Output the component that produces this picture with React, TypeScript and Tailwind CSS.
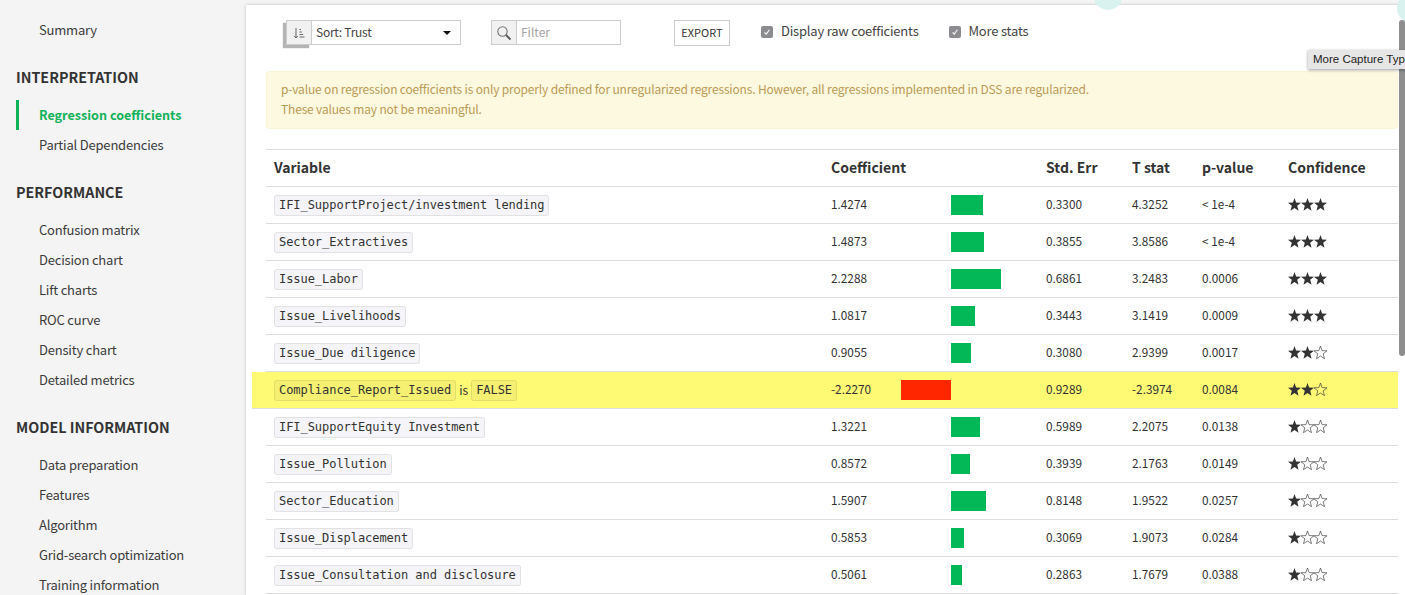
import React from "react";

const sans = "font-['Noto_Sans_CJK_SC','Source_Sans_Pro',sans-serif]";

const rows = [
  { name: "IFI_SupportProject/investment lending", coef: "1.4274", bar: 32, err: "0.3300", t: "4.3252", p: "< 1e-4", stars: 3 },
  { name: "Sector_Extractives", coef: "1.4873", bar: 33, err: "0.3855", t: "3.8586", p: "< 1e-4", stars: 3 },
  { name: "Issue_Labor", coef: "2.2288", bar: 50, err: "0.6861", t: "3.2483", p: "0.0006", stars: 3 },
  { name: "Issue_Livelihoods", coef: "1.0817", bar: 24, err: "0.3443", t: "3.1419", p: "0.0009", stars: 3 },
  { name: "Issue_Due diligence", coef: "0.9055", bar: 20, err: "0.3080", t: "2.9399", p: "0.0017", stars: 2 },
  { name: "Compliance_Report_Issued", value: "FALSE", coef: "-2.2270", bar: -50, err: "0.9289", t: "-2.3974", p: "0.0084", stars: 2 },
  { name: "IFI_SupportEquity Investment", coef: "1.3221", bar: 29, err: "0.5989", t: "2.2075", p: "0.0138", stars: 1 },
  { name: "Issue_Pollution", coef: "0.8572", bar: 19, err: "0.3939", t: "2.1763", p: "0.0149", stars: 1 },
  { name: "Sector_Education", coef: "1.5907", bar: 35, err: "0.8148", t: "1.9522", p: "0.0257", stars: 1 },
  { name: "Issue_Displacement", coef: "0.5853", bar: 13, err: "0.3069", t: "1.9073", p: "0.0284", stars: 1 },
  { name: "Issue_Consultation and disclosure", coef: "0.5061", bar: 11, err: "0.2863", t: "1.7679", p: "0.0388", stars: 1 },
];

const groups = [
  { title: "INTERPRETATION", items: ["Regression coefficients", "Partial Dependencies"] },
  { title: "PERFORMANCE", items: ["Confusion matrix", "Decision chart", "Lift charts", "ROC curve", "Density chart", "Detailed metrics"] },
  { title: "MODEL INFORMATION", items: ["Data preparation", "Features", "Algorithm", "Grid-search optimization", "Training information"] },
];

function NavItem({ label }: { label: string }) {
  const active = label === "Regression coefficients";
  return (
    <div
      className={
        active
          ? "h-[30px] ml-[16px] pl-[20px] border-l-[3px] border-[#0fb257] flex items-center text-[12.6px] font-semibold text-[#12b259]"
          : "h-[30px] ml-[39px] flex items-center text-[13px] tracking-[-0.2px] text-[#3c3c3c]"
      }
    >
      <span className="-translate-y-[0.5px]">{label}</span>
    </div>
  );
}

function Sidebar() {
  return (
    <aside className="w-[246px] shrink-0 pt-[15px]">
      <NavItem label="Summary" />
      {groups.map((g) => (
        <div key={g.title} className="mt-[21px]">
          <div className="h-[22px] mb-[12px] pl-[16px] flex items-center text-[14.3px] font-bold text-[#333333]">
            {g.title}
          </div>
          {g.items.map((i) => (
            <NavItem key={i} label={i} />
          ))}
        </div>
      ))}
    </aside>
  );
}

function Chip({ children }: { children: React.ReactNode }) {
  return (
    <code className="inline-block h-[21px] leading-[19px] px-[4px] rounded-[3px] border border-[#00000014] bg-[#0000660a] font-['DejaVu_Sans_Mono',monospace] text-[12px] tracking-[-0.05px] text-[#333333]">
      {children}
    </code>
  );
}

function Check() {
  return (
    <span className="w-[12px] h-[12px] rounded-[2px] bg-[#8c8c90] flex items-center justify-center">
      <svg width="8" height="8" viewBox="0 0 8 8" fill="none">
        <path d="M1.6 4.4 L3.2 6.2 L6.4 1.8" stroke="#ffffff" strokeWidth="1.1" />
      </svg>
    </span>
  );
}

const STAR = "M6.5 0 L8.1 4.6 L13 4.8 L9.2 7.8 L10.5 12.7 L6.5 10 L2.5 12.7 L3.8 7.8 L0 4.8 L4.9 4.6 Z";

function Stars({ n }: { n: number }) {
  return (
    <span className="flex pb-[2px]">
      {[0, 1, 2].map((i) => (
        <svg key={i} width="13" height="13" viewBox="0 0 13 13">
          <path
            d={STAR}
            fill={i < n ? "#333333" : "none"}
            stroke={i < n ? "none" : "#444444"}
            strokeWidth="0.7"
          />
        </svg>
      ))}
    </span>
  );
}

function Toolbar() {
  return (
    <div className="h-[66px] pt-[15px] flex items-start text-[13px] text-[#555555]">
      <div className="ml-[20px] flex h-[25px] w-[175px]">
        <div className="w-[26px] bg-[#f1f1f1] border border-[#cccccc] flex items-center justify-center shadow-[-3px_3px_1px_#b4b4b4]">
          <svg width="12" height="12" viewBox="0 0 12 12" fill="none" stroke="#666666" strokeWidth="1">
            <path d="M3 1 V11 M1.2 9 L3 11 L4.8 9" />
            <path d="M6.5 2.5 H8 M6.5 5 H9 M6.5 7.5 H10.2 M6.5 10 H11.5" />
          </svg>
        </div>
        <div className="relative flex-1 bg-white border border-l-0 border-[#cccccc] flex items-center justify-between pl-[4px] pr-[9px] pb-[2px]">
          <span className="text-[#444444] text-[12px] tracking-[-0.25px]">Sort: Trust</span>
          <span className="w-0 h-0 mt-[2px] border-l-[4px] border-r-[4px] border-t-[4px] border-l-transparent border-r-transparent border-t-[#111111]" />
        </div>
      </div>
      <div className="ml-[30px] flex h-[25px] w-[130px]">
        <div className="w-[26px] bg-[#f1f1f1] border border-[#cccccc] flex items-center justify-center">
          <svg width="16" height="16" viewBox="0 0 16 16" fill="none">
            <circle cx="6.5" cy="6.5" r="4.7" stroke="#777777" strokeWidth="1.1" />
            <path d="M10 10 L14.5 14.5" stroke="#555555" strokeWidth="1.8" />
          </svg>
        </div>
        <div className="flex-1 bg-white border border-l-0 border-[#cccccc] flex items-center pl-[4px] pb-[2px] text-[#a4a4a4] text-[12px]">
          Filter
        </div>
      </div>
      <div className="ml-[53px] h-[26px] w-[56px] border border-[#cccccc] flex items-center justify-center pb-[2px] text-[11px] text-[#333333]">
        EXPORT
      </div>
      <div className="ml-[31px] h-[24px] flex items-center">
        <Check />
        <span className="ml-[8px] text-[13px] tracking-[-0.2px] text-[#444444] leading-[22px] h-[24px]">Display raw coefficients</span>
      </div>
      <div className="ml-[30px] h-[24px] flex items-center">
        <Check />
        <span className="ml-[8px] text-[13px] tracking-[-0.2px] text-[#444444] leading-[22px] h-[24px]">More stats</span>
      </div>
    </div>
  );
}

function Row({ r }: { r: (typeof rows)[number] }) {
  const hl = r.bar < 0;
  return (
    <div
      className={
        hl
          ? "relative h-[37px] flex items-center border-b border-[#dddddd] bg-[#fffa73] -ml-[14px] pl-[22px] text-[11.8px] text-[#333333]"
          : "h-[37px] flex items-center border-b border-[#dddddd] pl-[8px] text-[11.8px] text-[#333333]"
      }
    >
      <div className="w-[557px] shrink-0 flex items-center gap-[3px]">
        <Chip>{r.name}</Chip>
        {r.value && (
          <>
            <span className="text-[12px]">is</span>
            <Chip>{r.value}</Chip>
          </>
        )}
      </div>
      <div className="w-[70px] shrink-0 pb-[2px]">{r.coef}</div>
      <div className="w-[50px] shrink-0 flex justify-end">
        {r.bar < 0 && <div className="h-[20px] bg-[#ff2600]" style={{ width: -r.bar }} />}
      </div>
      <div className="w-[95px] shrink-0">
        {r.bar > 0 && <div className="h-[20px] bg-[#03b856]" style={{ width: r.bar }} />}
      </div>
      <div className="w-[86px] shrink-0 pb-[2px]">{r.err}</div>
      <div className="w-[70px] shrink-0 pb-[2px]">{r.t}</div>
      <div className="w-[86px] shrink-0 pb-[2px]">{r.p}</div>
      <Stars n={r.stars} />
    </div>
  );
}

export default function App() {
  return (
    <div className={`relative w-[1405px] h-[595px] overflow-hidden bg-[#f4f4f4] flex leading-[20px] ${sans}`}>
      <Sidebar />
      <main className="relative mt-[5px] flex-1 bg-white shadow-[0_0_3px_#bbbbbb] pl-[20px] pr-[7px]">
        <Toolbar />
        <div className="h-[58px] rounded-[4px] border border-[#f9f4d8] bg-[#fcf9e0] px-[14px] py-[7px] text-[12px] tracking-[-0.165px] text-[#bd9a55]">
          <div>p-value on regression coefficients is only properly defined for unregularized regressions. However, all regressions implemented in DSS are regularized.</div>
          <div>These values may not be meaningful.</div>
        </div>
        <div className="mt-[20px] border-t border-[#dddddd]">
          <div className="h-[37px] flex items-center border-b border-[#dddddd] pl-[8px] pb-[2px] text-[14px] font-bold text-[#333333]">
            <div className="w-[557px] shrink-0">Variable</div>
            <div className="w-[215px] shrink-0">Coefficient</div>
            <div className="w-[86px] shrink-0">Std. Err</div>
            <div className="w-[70px] shrink-0">T stat</div>
            <div className="w-[86px] shrink-0">p-value</div>
            <div>Confidence</div>
          </div>
          {rows.map((r) => (
            <Row key={r.name} r={r} />
          ))}
        </div>
      </main>
      <div className="absolute left-[1093px] -top-[20px] w-[30px] h-[30px] rounded-full bg-[#d9f1ef]" />
      <div className="absolute left-[1397px] -top-[7px] w-[30px] h-[30px] rounded-full bg-[#d9f1ef]" />
      <div className="absolute right-0 top-[20px] w-[6px] h-[336px] rounded-[3px] bg-[#8e8e8e]" />
      <div className="absolute left-[1308px] top-[50px] h-[19px] w-[97px] pl-[5px] bg-[#e6e6e6] shadow-[0_1px_3px_#00000066] font-['Liberation_Sans',sans-serif] text-[11.5px] leading-[19px] text-[#222222] whitespace-nowrap overflow-hidden">
        More Capture Types
      </div>
    </div>
  );
}
